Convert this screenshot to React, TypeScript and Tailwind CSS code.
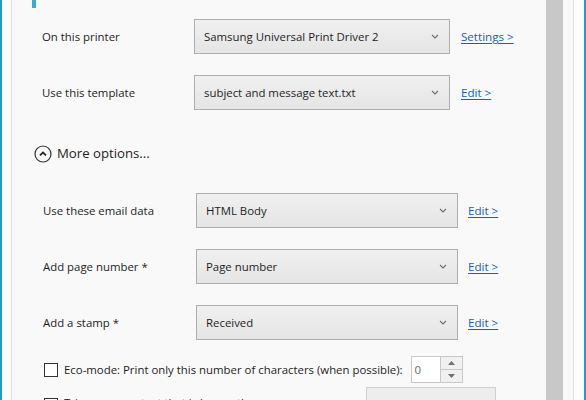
import React from 'react';

const Chevron: React.FC = () => (
  <svg width="8" height="5" viewBox="0 0 8 5" className="shrink-0">
    <path d="M1 1 L4 4 L7 1" fill="none" stroke="#707070" strokeWidth="1.2" />
  </svg>
);

const Select: React.FC<{ value: string; width: string }> = ({ value, width }) => (
  <div
    className={`${width} h-[35px] shrink-0 flex items-center justify-between pl-[9px] pr-[10px] border border-[#adadad] bg-gradient-to-b from-[#f0f0f0] to-[#e5e5e5] text-[#1e1e1e]`}
  >
    <span>{value}</span>
    <Chevron />
  </div>
);

const Row: React.FC<{ label: string; value: string; link: string; wide?: boolean }> = ({ label, value, link, wide }) => (
  <div className="flex items-center h-[35px]">
    <div className={wide ? 'w-[154px] pl-[1px] shrink-0' : 'w-[152px] shrink-0'}>{label}</div>
    <Select value={value} width={wide ? 'w-[262px]' : 'w-[256px]'} />
    <a className={`${wide ? 'ml-[10px]' : 'ml-[11px]'} text-[#0b64c8] text-[11.6px] underline underline-offset-2`}>{link}</a>
  </div>
);

const Checkbox: React.FC = () => (
  <div className="w-[14px] h-[14px] border border-[#333] bg-white shrink-0" />
);

const App: React.FC = () => {
  return (
    <div
      className="w-[586px] h-[400px] overflow-hidden flex bg-white text-[11.4px] text-[#1e1e1e] border-x-2 border-[#1ba1c4]"
      style={{ fontFamily: '"Open Sans", "Noto Sans", sans-serif' }}
    >
      <div className="w-[9px] shrink-0 bg-white" />
      <div className="flex-1 flex bg-[#f9f9f9] border-l border-r border-[#dfdfdf]">
        <div className="flex-1 min-w-0 overflow-hidden">
          <div className="ml-[20px] w-[4px] h-[8px] bg-[#3aa8d8]" />

          <div className="pl-[30px] mt-[11px] flex flex-col gap-[21px]">
            <Row label="On this printer" value="Samsung Universal Print Driver 2" link="Settings >" />
            <Row label="Use this template" value="subject and message text.txt" link="Edit >" />
          </div>

          <div className="pl-[22px] mt-[35px] flex items-center h-[18px] text-[13.2px]">
            <svg width="18" height="18" viewBox="0 0 18 18" className="shrink-0">
              <circle cx="9" cy="9" r="8" fill="none" stroke="#333" strokeWidth="1.2" />
              <path d="M6 10.4 L9 7.4 L12 10.4" fill="none" stroke="#222" strokeWidth="1.8" />
            </svg>
            <span className="ml-[5px]">More options...</span>
          </div>

          <div className="pl-[30px] mt-[30px] flex flex-col gap-[21px]">
            <Row wide label="Use these email data" value="HTML Body" link="Edit >" />
            <Row wide label="Add page number *" value="Page number" link="Edit >" />
            <Row wide label="Add a stamp *" value="Received" link="Edit >" />
          </div>

          <div className="pl-[32px] mt-[16px] flex items-center h-[27px]">
            <Checkbox />
            <span className="ml-[6px]">Eco-mode: Print only this number of characters (when possible):</span>
            <div className="ml-[8px] w-[30px] h-[27px] border border-[#c8c8c8] bg-white flex items-center pl-[3px] text-[#6b6b6b] shrink-0">0</div>
            <div className="w-[22px] h-[27px] flex flex-col shrink-0">
              <div className="flex-1 border border-[#c8c8c8] border-l-0 bg-[#f0f0f0] flex items-center justify-center">
                <svg width="7" height="4" viewBox="0 0 7 4"><path d="M0 4 L3.5 0 L7 4 Z" fill="#707070" /></svg>
              </div>
              <div className="flex-1 border border-[#c8c8c8] border-l-0 border-t-0 bg-[#f0f0f0] flex items-center justify-center">
                <svg width="7" height="4" viewBox="0 0 7 4"><path d="M0 0 L3.5 4 L7 0 Z" fill="#707070" /></svg>
              </div>
            </div>
          </div>

          <div className="pl-[32px] mt-[4px] flex items-start h-[35px]">
            <div className="mt-[11px]"><Checkbox /></div>
            <span className="ml-[6px] mt-[7px]">Trim message text that is longer than:</span>
            <div className="ml-auto mr-[50px] w-[130px] h-[35px] border border-[#d0d0d0] bg-[#ededed] pl-[10px] pt-[7px] shrink-0">first page only</div>
          </div>
        </div>
        <div className="w-[17px] shrink-0 bg-[#c8c8c8]" />
        <div className="w-[10px] shrink-0" />
      </div>
      <div className="w-[10px] shrink-0 bg-white" />
    </div>
  );
};

export default App;
